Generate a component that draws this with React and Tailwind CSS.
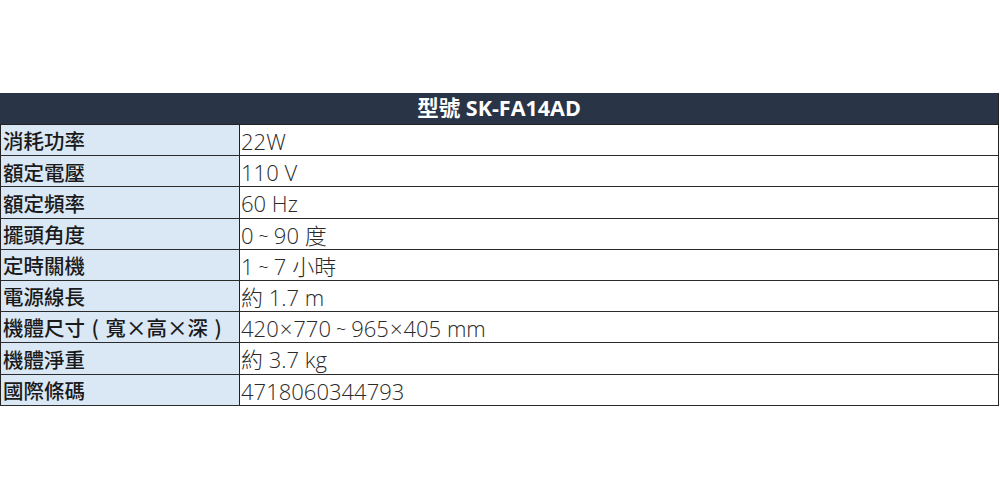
import React from 'react'

const rows = [
  ['消耗功率', '22W'],
  ['額定電壓', '110 V'],
  ['額定頻率', '60 Hz'],
  ['擺頭角度', '0～90 度'],
  ['定時關機', '1～7 小時'],
  ['電源線長', '約 1.7 m'],
  ['機體尺寸（寬×高×深）', '420×770～965×405 mm'],
  ['機體淨重', '約 3.7 kg'],
  ['國際條碼', '4718060344793'],
]

// labels: full-width ×, centred brackets
function Label({ text }) {
  return text.split('').map((c, i) =>
    c === '×' || c === '（' || c === '）' ? (
      <span key={i} className="inline-block w-[20.5px] text-center">
        {c === '×' ? '×' : c === '（' ? '(' : ')'}
      </span>
    ) : (
      c
    )
  )
}

// values: small tilde with air around it, slightly wider ×
function Value({ text }) {
  return text.split('').map((c, i) =>
    c === '～' ? (
      <span key={i} className="inline-block px-[5px] text-[18px]">~</span>
    ) : c === '×' ? (
      <span key={i} className="inline-block px-[1px]">×</span>
    ) : (
      c
    )
  )
}

export default function App() {
  return (
    <div className="w-[1000px] h-[500px] bg-white pt-[93px]">
      <div className="w-[999px] border-r border-[#222]">
        <div
          className="h-[32px] bg-[#2a3447] border-b border-[#222] flex items-center justify-center text-white text-[21.5px] font-bold"
          style={{ fontFamily: '"Open Sans", "Noto Sans CJK TC", sans-serif' }}
        >
          型號 SK-FA14AD
        </div>
        {rows.map(([k, v]) => (
          <div key={k} className="flex h-[31.2px] border-b border-[#2b2b2b]">
            <div
              className="w-[240px] shrink-0 bg-[#dae7f4] border-l border-r border-[#222] pl-[2px] pt-[1px] flex items-center text-[20.5px] font-medium text-[#1a1a1a] leading-none whitespace-nowrap"
              style={{ fontFamily: '"Noto Sans CJK TC", sans-serif' }}
            >
              <Label text={k} />
            </div>
            <div
              className="flex-1 pl-[1px] pt-[2px] flex items-center text-[22px] font-light text-[#2a2a2a] leading-none whitespace-nowrap"
              style={{ fontFamily: '"Open Sans", "Noto Sans CJK TC", sans-serif' }}
            >
              <Value text={v} />
            </div>
          </div>
        ))}
      </div>
    </div>
  )
}
